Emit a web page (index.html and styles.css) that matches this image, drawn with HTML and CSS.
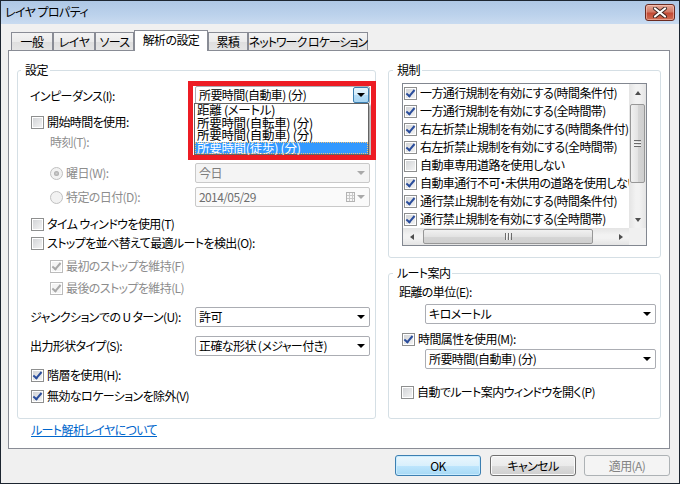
FILE: index.html
```html
<!DOCTYPE html>
<html lang="ja">
<head>
    <meta charset="UTF-8">
    <title>レイヤ プロパティ</title>
    <link rel="stylesheet" href="styles.css">
</head>
<body>
<div class="window">
    <div class="titlebar">
        <span class="title">レイヤ プロパティ</span>
        <span class="close">
            <svg width="16" height="11" viewBox="0 0 16 11">
                <path d="M3 1.5 L13 9.5 M13 1.5 L3 9.5" stroke="#3d2420" stroke-width="4" stroke-linecap="round"/>
                <path d="M3 1.5 L13 9.5 M13 1.5 L3 9.5" stroke="#ffffff" stroke-width="2.2" stroke-linecap="round"/>
            </svg>
        </span>
    </div>

    <div class="dialog">
        <div class="tabs">
            <div class="tab t1">一般</div>
            <div class="tab t2">レイヤ</div>
            <div class="tab t3">ソース</div>
            <div class="tab active">解析の設定</div>
            <div class="tab t5">累積</div>
            <div class="tab t6">ネットワーク ロケーション</div>
        </div>

        <div class="panel">
            <div class="columns">
                <div class="col-left">
                    <fieldset class="group settings">
                        <legend>設定</legend>
                        <div class="group-body">
                            <div class="row tall">
                                <span>インピーダンス(I):</span>
                                <div class="combo open">
                                    <span class="value">所要時間(自動車) (分)</span>
                                    <span class="drop hot"><i class="arrow"></i></span>
                                </div>
                            </div>
                            <div class="row mt8 cbrow">
                                <span class="cb"></span><span>開始時間を使用:</span>
                            </div>
                            <div class="row mt4 indent dim">時刻(T):</div>
                            <div class="row tall mt13">
                                <span class="radio-wrap indent dim"><span class="radio on"></span>曜日(W):</span>
                                <div class="combo disabled">
                                    <span class="value">今日</span>
                                    <span class="drop"><i class="arrow"></i></span>
                                </div>
                            </div>
                            <div class="row tall mt4">
                                <span class="radio-wrap indent dim"><span class="radio"></span>特定の日付(D):</span>
                                <div class="combo date">
                                    <span class="value">2014/05/29</span>
                                    <span class="cal"></span>
                                    <span class="drop small"><i class="arrow"></i></span>
                                </div>
                            </div>
                            <div class="row mt9 cbrow">
                                <span class="cb"></span><span>タイム ウィンドウを使用(T)</span>
                            </div>
                            <div class="row mt3 cbrow">
                                <span class="cb"></span><span>ストップを並べ替えて最適ルートを検出(O):</span>
                            </div>
                            <div class="row mt7 cbrow indent dim">
                                <span class="cb on off"></span><span>最初のストップを維持(F)</span>
                            </div>
                            <div class="row mt6 cbrow indent dim">
                                <span class="cb on off"></span><span>最後のストップを維持(L)</span>
                            </div>
                            <div class="row tall mt11">
                                <span>ジャンクションでの U ターン(U):</span>
                                <div class="combo">
                                    <span class="value">許可</span>
                                    <span class="drop"><i class="arrow"></i></span>
                                </div>
                            </div>
                            <div class="row tall mt9">
                                <span>出力形状タイプ(S):</span>
                                <div class="combo">
                                    <span class="value">正確な形状 (メジャー付き)</span>
                                    <span class="drop"><i class="arrow"></i></span>
                                </div>
                            </div>
                            <div class="row mt11 cbrow">
                                <span class="cb on"></span><span>階層を使用(H):</span>
                            </div>
                            <div class="row mt5 cbrow">
                                <span class="cb on"></span><span>無効なロケーションを除外(V)</span>
                            </div>

                            <!-- 開いたドロップダウンと赤枠 -->
                            <ul class="droplist">
                                <li>距離 (メートル)</li>
                                <li>所要時間(自転車) (分)</li>
                                <li>所要時間(自動車) (分)</li>
                                <li class="sel">所要時間(徒歩) (分)</li>
                            </ul>
                            <div class="callout"></div>
                        </div>
                    </fieldset>
                    <a class="help-link" href="#">ルート解析レイヤについて</a>
                </div>

                <div class="col-right">
                    <fieldset class="group rules">
                        <legend>規制</legend>
                        <div class="listbox">
                            <div class="items">
                                <div class="item"><span class="cb on"></span>一方通行規制を有効にする(時間条件付)</div>
                                <div class="item"><span class="cb on"></span>一方通行規制を有効にする(全時間帯)</div>
                                <div class="item"><span class="cb on"></span>右左折禁止規制を有効にする(時間条件付)</div>
                                <div class="item"><span class="cb on"></span>右左折禁止規制を有効にする(全時間帯)</div>
                                <div class="item"><span class="cb"></span>自動車専用道路を使用しない</div>
                                <div class="item"><span class="cb on"></span>自動車通行不可・未供用の道路を使用しない</div>
                                <div class="item"><span class="cb on"></span>通行禁止規制を有効にする(時間条件付)</div>
                                <div class="item"><span class="cb on"></span>通行禁止規制を有効にする(全時間帯)</div>
                            </div>
                            <div class="vscroll">
                                <span class="sbtn"><i class="tri up"></i></span>
                                <span class="thumb v"><i class="grip"></i></span>
                                <span class="track"></span>
                                <span class="sbtn"><i class="tri down"></i></span>
                            </div>
                            <div class="hscroll">
                                <span class="sbtn"><i class="tri left"></i></span>
                                <span class="thumb h"><i class="grip"></i></span>
                                <span class="track"></span>
                                <span class="sbtn"><i class="tri right"></i></span>
                            </div>
                            <div class="corner"></div>
                        </div>
                    </fieldset>

                    <fieldset class="group guide">
                        <legend>ルート案内</legend>
                        <div class="guide-body">
                            <div class="row unit-label">距離の単位(E):</div>
                            <div class="combo wide mt4">
                                <span class="value">キロメートル</span>
                                <span class="drop"><i class="arrow"></i></span>
                            </div>
                            <div class="row mt7 cbrow time-attr">
                                <span class="cb on"></span><span>時間属性を使用(M):</span>
                            </div>
                            <div class="combo wide mt2">
                                <span class="value">所要時間(自動車) (分)</span>
                                <span class="drop"><i class="arrow"></i></span>
                            </div>
                            <div class="row mt15 cbrow auto-open">
                                <span class="cb"></span><span>自動でルート案内ウィンドウを開く(P)</span>
                            </div>
                        </div>
                    </fieldset>
                </div>
            </div>
        </div>

        <div class="buttons">
            <button class="btn default">OK</button>
            <button class="btn">キャンセル</button>
            <button class="btn disabled">適用(A)</button>
        </div>
    </div>
</div>
</body>
</html>
```

FILE: styles.css
```css
html, body {
    margin: 0;
    padding: 0;
    background: #f0f0f0;
    font-family: "Noto Sans CJK JP", "Noto Sans", sans-serif;
    font-size: 12px;
    font-feature-settings: "palt";
    letter-spacing: -0.6px;
    color: #000;
}

.window {
    width: 680px;
    height: 484px;
    box-sizing: border-box;
    border: 1px solid #1c2530;
    background: #f0f0f0;
    overflow: hidden;
}

/* タイトルバー */
.titlebar {
    height: 23px;
    display: flex;
    align-items: center;
    justify-content: space-between;
    padding-left: 4px;
    background: linear-gradient(#aec7e5, #bcd2ec 60%, #c9dbf0);
}

.title {
    line-height: 16px;
    margin-top: -1px;
}

.close {
    align-self: flex-start;
    margin-top: 3px;
    margin-right: 4px;
    width: 30px;
    height: 17px;
    box-sizing: border-box;
    border: 1px solid #6b2a20;
    border-radius: 3px;
    background: linear-gradient(#e5a897, #d27a67 45%, #c24a35 55%, #cf6e55);
    box-shadow: inset 0 0 0 1px rgba(255, 210, 200, 0.5);
    display: flex;
    align-items: center;
    justify-content: center;
}

.dialog {
    padding: 6px 9px 0 7px;
}

/* タブ */
.tabs {
    height: 20px;
    display: flex;
    align-items: flex-end;
    padding-left: 3px;
}

.tab {
    height: 18px;
    box-sizing: border-box;
    border: 1px solid #898c95;
    border-bottom: none;
    background: linear-gradient(#f3f3f3, #ebebeb 50%, #dedede 50%, #e5e5e5);
    display: flex;
    align-items: center;
    justify-content: center;
    line-height: 16px;
    padding-top: 1px;
    white-space: nowrap;
}

.t1 { width: 42px; }
.t2 { width: 42px; }
.t3 { width: 39px; }
.t5 { width: 40px; }
.t6 { width: 120px; letter-spacing: -1px; }

.tab.active {
    width: 74px;
    height: 21px;
    margin-bottom: -1px;
    background: #fff;
    position: relative;
    z-index: 1;
    padding-top: 0;
    padding-bottom: 2px;
}

.panel {
    height: 399px;
    box-sizing: border-box;
    border: 1px solid #898c95;
    background: #fff;
    padding: 11px 8px 0 8px;
}

.columns {
    display: flex;
    gap: 12px;
}

.col-left { width: 359px; }
.col-right { width: 273px; }

/* グループ枠 */
.group {
    margin: 0;
    padding: 0;
    border: 1px solid #d5dfe5;
    border-radius: 3px;
    box-sizing: border-box;
}

.group legend {
    margin-left: 3px;
    padding: 0 2px 0 4px;
    line-height: 16px;
}

.settings { height: 357px; }
.rules { height: 196px; }
.guide { height: 154px; margin-top: 7px; }

.rules legend, .guide legend { margin-left: 4px; }

.group-body {
    position: relative;
    padding: 8px 5px 0 12px;
}

.row {
    height: 16px;
    line-height: 16px;
    display: flex;
    align-items: center;
    white-space: nowrap;
}

.row.tall {
    height: 20px;
    justify-content: space-between;
}

.cbrow { margin-left: 1px; }
.cbrow .cb { margin-right: 3px; }

.indent { margin-left: 20px; }
.cbrow.indent { margin-left: 20px; }
.dim { color: #8d8d8d; }

.mt2 { margin-top: 2px; }
.mt3 { margin-top: 3px; }
.mt4 { margin-top: 4px; }
.mt5 { margin-top: 5px; }
.mt6 { margin-top: 6px; }
.mt7 { margin-top: 7px; }
.mt8 { margin-top: 8px; }
.mt9 { margin-top: 9px; }
.mt11 { margin-top: 11px; }
.mt13 { margin-top: 13px; }
.mt15 { margin-top: 15px; }

/* チェックボックス・ラジオ */
.cb {
    width: 13px;
    height: 13px;
    flex: none;
    box-sizing: border-box;
    border: 1px solid #8e8f8f;
    background: linear-gradient(135deg, #cfd1d4, #f6f6f6);
    box-shadow: inset 0 0 0 1px #fff;
    position: relative;
    display: inline-block;
}

.cb.on::after {
    content: "";
    position: absolute;
    left: 3px;
    top: 0px;
    width: 3px;
    height: 7px;
    border-right: 2px solid #2a4d9c;
    border-bottom: 2px solid #2a4d9c;
    transform: rotate(40deg);
}

.cb.off {
    border-color: #bcbcbc;
    background: #f4f4f4;
}

.cb.off::after {
    border-color: #a8a8a8;
}

.radio-wrap {
    display: flex;
    align-items: center;
}

.radio {
    width: 13px;
    height: 13px;
    box-sizing: border-box;
    border-radius: 50%;
    border: 1px solid #c0c0c0;
    background: #f2f2f2;
    margin-right: 3px;
    display: flex;
    align-items: center;
    justify-content: center;
}

.radio.on::after {
    content: "";
    width: 5px;
    height: 5px;
    border-radius: 50%;
    background: radial-gradient(#d0d0d0, #9a9a9a);
}

/* コンボボックス */
.combo {
    width: 175px;
    height: 20px;
    box-sizing: border-box;
    border: 1px solid #abadb3;
    border-radius: 2px;
    background: #fff;
    display: flex;
    align-items: center;
    white-space: nowrap;
    line-height: 16px;
}

.combo.open {
    height: 18px;
    align-self: flex-start;
}

.combo .value {
    flex: 1;
    padding-left: 3px;
}

.combo .drop {
    width: 17px;
    height: 100%;
    display: flex;
    align-items: center;
    justify-content: center;
    box-sizing: border-box;
}

.combo .drop.hot {
    height: 16px;
    width: 16px;
    margin-right: 0;
    border: 1px solid #3c7fb1;
    border-radius: 2px;
    background: linear-gradient(#e8f5fd, #d3ecfb 50%, #b7def7 50%, #a6d4f2);
}

.arrow {
    width: 0;
    height: 0;
    border-left: 4px solid transparent;
    border-right: 4px solid transparent;
    border-top: 4px solid #000;
}

.combo.disabled {
    background: #f4f4f4;
    border-color: #c9c9c9;
    color: #7d7d7d;
}

.combo.disabled .arrow, .combo.date .arrow {
    border-top-color: #a9a9a9;
}

.combo.date {
    border-color: #c9c9c9;
    color: #6f6f6f;
    background: #fafafa;
}

.combo.date .drop.small { width: 11px; margin-right: 3px; }

.cal {
    width: 9px;
    height: 10px;
    box-sizing: border-box;
    border: 1px solid #b3b3b3;
    background:
        repeating-linear-gradient(90deg, transparent 0 2px, #c9c9c9 2px 3px),
        repeating-linear-gradient(0deg, transparent 0 2px, #c9c9c9 2px 3px),
        #f7f7f7;
}

.combo.wide {
    width: 231px;
    margin-left: 26px;
}

/* 開いているドロップダウン */
.droplist {
    position: absolute;
    left: 176px;
    top: 25px;
    width: 175px;
    height: 52px;
    box-sizing: border-box;
    margin: 0;
    padding: 0;
    list-style: none;
    border: 1px solid #646464;
    background: #fff;
    box-shadow: 2px 2px 2px rgba(0, 0, 0, 0.35);
    font-size: 12.5px;
    letter-spacing: -0.3px;
    line-height: 12.5px;
    white-space: nowrap;
}

.droplist li {
    height: 12.5px;
    padding-left: 2px;
}

.droplist li.sel {
    background: #3399ff;
    color: #fff;
    outline: 1px dotted #f2c27a;
    outline-offset: -1px;
}

.callout {
    position: absolute;
    left: 170px;
    top: 3px;
    width: 188px;
    height: 79px;
    box-sizing: border-box;
    border: 5px solid #ed1c24;
}

.help-link {
    display: block;
    margin: 4px 0 0 14px;
    line-height: 14px;
    color: #0066cc;
    text-decoration: underline;
}

/* 規制リスト */
.listbox {
    margin: 5px 0 0 13px;
    width: 245px;
    height: 163px;
    box-sizing: border-box;
    border: 1px solid #828790;
    display: grid;
    grid-template-columns: 1fr 17px;
    grid-template-rows: 1fr 17px;
}

.items {
    overflow: hidden;
}

.item {
    height: 18px;
    display: flex;
    align-items: center;
    white-space: nowrap;
    padding-left: 1px;
    line-height: 16px;
}

.item .cb { margin-right: 3px; }

.vscroll, .hscroll {
    display: flex;
    background: linear-gradient(90deg, #e4e4e4, #f2f2f2 40%, #f2f2f2 60%, #e4e4e4);
}

.vscroll { flex-direction: column; }

.hscroll {
    background: linear-gradient(#e4e4e4, #f2f2f2 40%, #f2f2f2 60%, #e4e4e4);
}

.sbtn {
    width: 17px;
    height: 17px;
    flex: none;
    display: flex;
    align-items: center;
    justify-content: center;
}

.track { flex: 1; }

.thumb {
    flex: none;
    box-sizing: border-box;
    border: 1px solid #979797;
    border-radius: 2px;
    display: flex;
    align-items: center;
    justify-content: center;
}

.thumb.v {
    margin: 3px 1px 0 1px;
    height: 79px;
    background: linear-gradient(90deg, #f1f1f1, #e3e3e3 50%, #d6d6d6 50%, #cfcfcf);
}

.thumb.h {
    margin: 1px 0 1px 3px;
    width: 170px;
    background: linear-gradient(#f1f1f1, #e3e3e3 50%, #d6d6d6 50%, #cfcfcf);
}

.thumb.v .grip {
    width: 7px;
    height: 7px;
    background: repeating-linear-gradient(0deg, #6b6b6b 0 1px, #f4f4f4 1px 2px, transparent 2px 3px);
}

.thumb.h .grip {
    width: 7px;
    height: 7px;
    background: repeating-linear-gradient(90deg, #6b6b6b 0 1px, #f4f4f4 1px 2px, transparent 2px 3px);
}

.tri {
    width: 0;
    height: 0;
}

.tri.up {
    border-left: 3.5px solid transparent;
    border-right: 3.5px solid transparent;
    border-bottom: 4px solid #4e4e4e;
}

.tri.down {
    border-left: 3.5px solid transparent;
    border-right: 3.5px solid transparent;
    border-top: 4px solid #4e4e4e;
}

.tri.left {
    border-top: 3.5px solid transparent;
    border-bottom: 3.5px solid transparent;
    border-right: 4px solid #4e4e4e;
}

.tri.right {
    border-top: 3.5px solid transparent;
    border-bottom: 3.5px solid transparent;
    border-left: 4px solid #4e4e4e;
}

.corner { background: #f0f0f0; }

/* ルート案内 */
.guide-body {
    padding-left: 10px;
}

.unit-label { margin-top: 3px; }
.time-attr { margin-left: 3px; }
.auto-open { margin-left: 2px; }

/* ボタン */
.buttons {
    margin-top: 6px;
    display: flex;
    justify-content: flex-end;
    gap: 9px;
}

.btn {
    width: 86px;
    height: 21px;
    box-sizing: border-box;
    border: 1px solid #707070;
    border-radius: 3px;
    background: linear-gradient(#f2f2f2, #ebebeb 50%, #dddddd 50%, #cfcfcf);
    box-shadow: inset 0 0 0 1px #fbfbfb;
    font-family: inherit;
    font-size: 12px;
    font-feature-settings: "palt";
    letter-spacing: inherit;
    line-height: 16px;
    padding: 0;
    color: #000;
}

.btn.default {
    border-color: #3c7fb1;
    background: linear-gradient(#eaf6fd, #d9f0fc 50%, #bee6fd 50%, #a7d9f5);
    box-shadow: inset 0 0 0 1px #c9ecff;
}

.btn.disabled {
    margin-left: -1px;
    border-color: #adb2b5;
    background: #f4f4f4;
    box-shadow: none;
    color: #838383;
}
```
